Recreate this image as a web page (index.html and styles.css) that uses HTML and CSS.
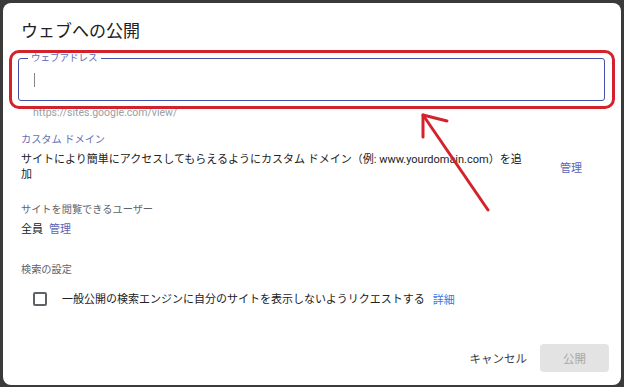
FILE: index.html
```html
<!DOCTYPE html>
<html lang="ja">
<head>
  <meta charset="UTF-8">
  <meta name="viewport" content="width=device-width, initial-scale=1.0">
  <title>ウェブへの公開</title>
  <link rel="stylesheet" href="styles.css">
</head>
<body>

<div class="dialog">
  <h1 class="title">ウェブへの公開</h1>

  <div class="field">
    <span class="field-label">ウェブアドレス</span>
    <span class="caret"></span>
  </div>
  <p class="helper">https://sites.google.com/view/</p>

  <p class="caption caption-blue">カスタム ドメイン</p>
  <div class="domain-row">
    <p class="body-text domain-text">サイトにより簡単にアクセスしてもらえるようにカスタム ドメイン（例: www.yourdomain.com）を追加</p>
    <a class="link" href="#">管理</a>
  </div>

  <p class="caption caption-gap">サイトを閲覧できるユーザー</p>
  <p class="body-text viewers">全員<a class="link viewers-link" href="#">管理</a></p>

  <p class="caption caption-search">検索の設定</p>
  <label class="check-row">
    <span class="checkbox"></span>
    <span class="body-text">一般公開の検索エンジンに自分のサイトを表示しないようリクエストする</span>
    <a class="link detail-link" href="#">詳細</a>
  </label>

  <div class="footer">
    <button class="btn-text">キャンセル</button>
    <button class="btn-publish" disabled>公開</button>
  </div>

  <!-- annotation drawn over the screenshot -->
  <div class="highlight"></div>
  <svg class="arrow" width="618" height="382" viewBox="0 0 618 382">
    <polyline points="444,118 420,112 420,134" fill="none" stroke="#d3222b" stroke-width="3" stroke-linecap="round" stroke-linejoin="round"/>
    <line x1="420" y1="112" x2="485" y2="207" stroke="#d3222b" stroke-width="3" stroke-linecap="round"/>
  </svg>
</div>

</body>
</html>
```

FILE: styles.css
```css
body {
  margin: 0;
  background-color: #3a3a3a;
  font-family: Roboto, "Noto Sans CJK JP", sans-serif;
  color: #202124;
}
p {
  margin: 0;
}
.dialog {
  position: relative;
  box-sizing: border-box;
  display: flex;
  flex-direction: column;
  height: 382px;
  margin: 3px 3px 2px 3px;
  padding: 16px 16px 13px 18px;
  background-color: #fff;
  border-radius: 8px;
}
.title {
  margin: 0;
  font-size: 17px;
  font-weight: 400;
  line-height: 24px;
}
.field {
  position: relative;
  height: 43px;
  box-sizing: border-box;
  margin: 15px 0 0 -3px;
  border: 1px solid #4352a8;
  border-radius: 3px;
}
.field-label {
  position: absolute;
  left: 9px;
  top: -6px;
  padding: 0 3px;
  background-color: #fff;
  font-size: 9.5px;
  line-height: 10px;
  color: #5c68b4;
}
.caret {
  display: block;
  width: 1px;
  height: 14px;
  margin: 14px 0 0 15px;
  background-color: #80868b;
}
.helper {
  margin: 5px 0 0 12px;
  font-size: 10.5px;
  line-height: 14px;
  color: #9aa0a6;
}
.caption {
  margin-top: 13px;
  font-size: 10.2px;
  line-height: 14px;
  color: #5f6368;
}
.caption-blue {
  color: #6670b8;
}
.body-text {
  font-size: 11px;
  line-height: 15px;
}
.domain-row {
  display: flex;
  align-items: center;
  justify-content: space-between;
  margin-top: 5px;
  padding-right: 23px;
}
.domain-text {
  width: 505px;
}
.link {
  color: #5a66b5;
  text-decoration: none;
  font-size: 11px;
}
.caption-gap {
  margin-top: 21px;
}
.viewers {
  margin-top: 5px;
}
.viewers-link {
  margin-left: 6px;
}
.caption-search {
  margin-top: 26px;
}
.check-row {
  display: flex;
  align-items: center;
  height: 20px;
  margin-top: 12px;
  padding-left: 12px;
}
.checkbox {
  box-sizing: border-box;
  width: 14px;
  height: 14px;
  margin-right: 15px;
  border: 2px solid #5f6368;
  border-radius: 2px;
}
.detail-link {
  margin-left: 8px;
  color: #3b78e7;
}
.footer {
  display: flex;
  justify-content: flex-end;
  align-items: center;
  gap: 5px;
  margin-top: auto;
  margin-right: -4px;
}
.btn-text,
.btn-publish {
  font-family: Roboto, "Noto Sans CJK JP", sans-serif;
  font-size: 11.5px;
  border: none;
  border-radius: 4px;
  height: 28px;
  background: none;
}
.btn-text {
  padding: 0 8px;
  color: #3c4043;
}
.btn-publish {
  width: 69px;
  background-color: #e3e3e3;
  color: #a8a8a8;
}
.highlight {
  position: absolute;
  left: 6px;
  top: 47px;
  width: 606px;
  height: 59px;
  box-sizing: border-box;
  border: 3px solid #d3222b;
  border-radius: 10px;
  pointer-events: none;
}
.arrow {
  position: absolute;
  left: 0;
  top: 0;
  pointer-events: none;
}
```
